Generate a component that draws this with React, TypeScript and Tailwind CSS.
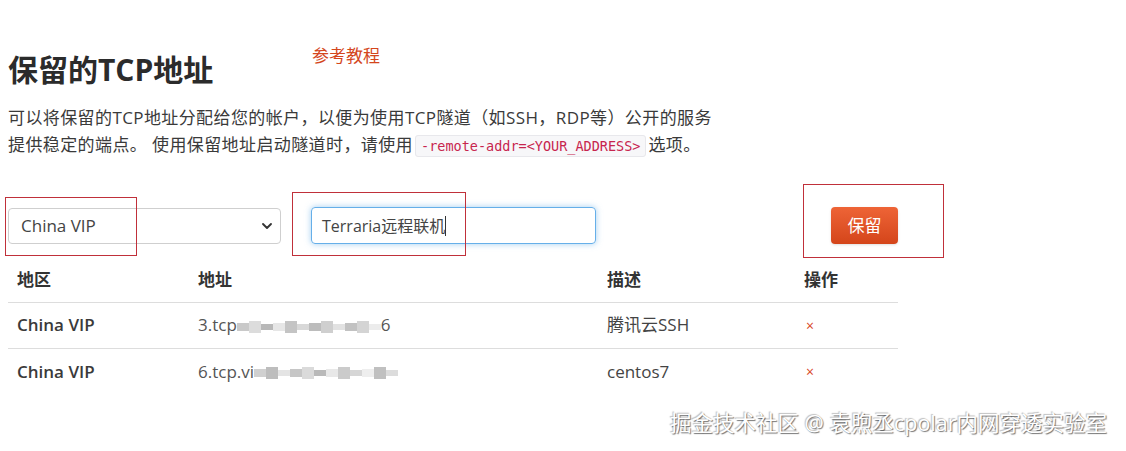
import { ChevronDown } from 'lucide-react';

const font = "font-['Open_Sans','Noto_Sans_CJK_SC',sans-serif]";

type Row = { region: string; prefix: string; blur: string[]; suffix: string; desc: string };

const rows: Row[] = [
  {
    region: 'China VIP',
    prefix: '3.tcp',
    blur: ['#c9c9c9', '#dcdcdc', '#b8b8b8', '#e6e6e6', '#c4c4c4', '#d8d8d8', '#bcbcbc', '#cfcfcf', '#e2e2e2', '#c2c2c2', '#d4d4d4', '#ececec'],
    suffix: '6',
    desc: '腾讯云SSH',
  },
  {
    region: 'China VIP',
    prefix: '6.tcp.vi',
    blur: ['#d0d0d0', '#bdbdbd', '#e4e4e4', '#c6c6c6', '#dadada', '#b9b9b9', '#e8e8e8', '#cbcbcb', '#d6d6d6', '#eeeeee', '#c0c0c0', '#dcdcdc'],
    suffix: '',
    desc: 'centos7',
  },
];

function Blurred({ shades }: { shades: string[] }) {
  return (
    <span className="inline-flex items-center h-[16px] align-middle">
      {shades.map((c, i) => (
        <span
          key={i}
          className={`inline-block w-[12px] ${i % 3 === 0 ? 'h-[8px]' : i % 3 === 1 ? 'h-[12px]' : 'h-[6px]'}`}
          style={{ backgroundColor: c }}
        />
      ))}
    </span>
  );
}

export default function App() {
  return (
    <div className={`relative w-[1126px] h-[451px] bg-white overflow-hidden text-[#333] ${font}`}>
      <div className="pl-[8px] pt-[44px]">
        <div className="flex items-start">
          <h1 className="mt-[8px] text-[30px] leading-[36px] font-bold text-[#2b2b2b] w-[304px]">保留的TCP地址</h1>
          <a className="text-[17px] leading-[24px] text-[#d4461c]">参考教程</a>
        </div>

        <p className="mt-[16px] text-[17px] leading-[27px] tracking-[0.4px] text-[#3a3a3a]">
          可以将保留的TCP地址分配给您的帐户，以便为使用TCP隧道（如SSH，RDP等）公开的服务
          <br />
          提供稳定的端点。 使用保留地址启动隧道时，请使用
          <code className="mx-[2px] px-[5px] py-[2px] rounded-[3px] bg-[#f7f7f9] border border-[#e8e8ec] text-[#c7254e] text-[13.5px] tracking-normal font-['DejaVu_Sans_Mono',monospace]">
            -remote-addr=&lt;YOUR_ADDRESS&gt;
          </code>
          选项。
        </p>

        <div className="mt-[47px] flex items-center">
          <div className="w-[273px] h-[36px] border border-[#cfcfcf] rounded-[4px] flex items-center justify-between pl-[12px] pr-[5px] text-[17px] text-[#444]">
            <span>China VIP</span>
            <ChevronDown size={16} strokeWidth={2.8} className="text-[#333]" />
          </div>
          <div className="ml-[30px] w-[285px] h-[37px] border border-[#66afe9] rounded-[4px] shadow-[0_0_6px_rgba(102,175,233,0.6)] flex items-center pl-[10px] text-[16px] text-[#444]">
            <span>Terraria远程联机</span>
            <span className="w-px h-[20px] bg-[#333]" />
          </div>
          <button className="ml-[235px] w-[67px] h-[37px] rounded-[4px] bg-gradient-to-b from-[#ee6436] to-[#d4451a] text-white text-[17px] shadow-sm">
            保留
          </button>
        </div>

        <table className="mt-[14px] w-[890px] text-[17px] border-collapse">
          <thead>
            <tr className="h-[44px] border-b border-[#dddddd]">
              <th className="w-[182px] pl-[9px] text-left font-bold">地区</th>
              <th className="w-[409px] pl-[8px] text-left font-bold">地址</th>
              <th className="w-[197px] pl-[8px] text-left font-bold">描述</th>
              <th className="pl-[8px] text-left font-bold">操作</th>
            </tr>
          </thead>
          <tbody>
            {rows.map((r, i) => (
              <tr key={i} className={`h-[46px] ${i === 0 ? 'border-b border-[#dddddd]' : ''}`}>
                <td className="pl-[9px] font-semibold text-[#3a3a3a]">{r.region}</td>
                <td className="pl-[8px] text-[#555]">
                  {r.prefix}
                  <Blurred shades={r.blur} />
                  {r.suffix}
                </td>
                <td className="pl-[8px] text-[#444]">{r.desc}</td>
                <td className="pl-[10px] text-[#d9461f] text-[14px]">×</td>
              </tr>
            ))}
          </tbody>
        </table>
      </div>

      {/* red annotation boxes */}
      <div className="absolute left-[5px] top-[197px] w-[132px] h-[59px] border border-[#c0303a]" />
      <div className="absolute left-[292px] top-[192px] w-[174px] h-[64px] border border-[#c0303a]" />
      <div className="absolute left-[803px] top-[184px] w-[141px] h-[74px] border border-[#c0303a]" />

      <div className="absolute left-[670px] top-[408px] text-[21.5px] leading-[30px] text-white [text-shadow:1px_1px_1px_rgba(0,0,0,0.55),-1px_-1px_1px_rgba(0,0,0,0.25)]">
        掘金技术社区 @ 袁煦丞cpolar内网穿透实验室
      </div>
    </div>
  );
}
